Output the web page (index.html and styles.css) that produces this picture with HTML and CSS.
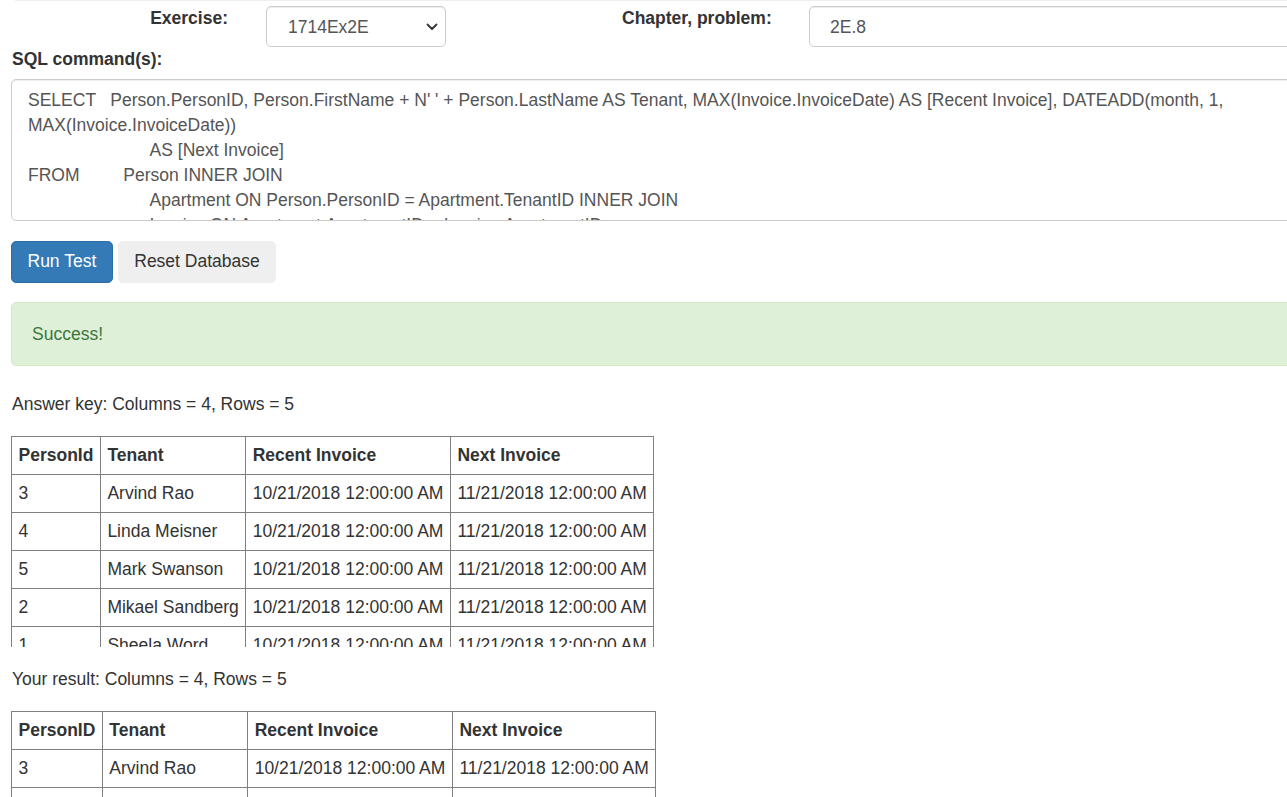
FILE: index.html
```html
<!DOCTYPE html>
<html lang="en">
<head>
<meta charset="utf-8">
<title>SQL Exercise</title>
<link rel="stylesheet" href="styles.css">
</head>
<body>
<div class="page">
  <div class="topline"></div>
  <div class="form-row">
    <div class="cell cell-label1"><label class="lbl">Exercise:</label></div>
    <div class="cell cell-select">
      <div class="select-wrap">
        <select class="form-control select">
          <option>1714Ex2E</option>
        </select>
        <svg class="chevron" width="12" height="8" viewBox="0 0 12 8" aria-hidden="true">
          <path d="M1.5 1.5 L6 6 L10.5 1.5" fill="none" stroke="#333" stroke-width="1.8" stroke-linecap="round" stroke-linejoin="round"/>
        </svg>
      </div>
    </div>
    <div class="cell cell-label2"><label class="lbl">Chapter, problem:</label></div>
    <div class="cell cell-input">
      <input class="form-control input" type="text" value="2E.8">
    </div>
  </div>

  <div class="content">
    <label class="lbl sql-label">SQL command(s):</label>
    <div class="sql-box">SELECT   Person.PersonID, Person.FirstName + N' ' + Person.LastName AS Tenant, MAX(Invoice.InvoiceDate) AS [Recent Invoice], DATEADD(month, 1, MAX(Invoice.InvoiceDate))
                         AS [Next Invoice]
FROM         Person INNER JOIN
                         Apartment ON Person.PersonID = Apartment.TenantID INNER JOIN
                         Invoice ON Apartment.ApartmentID = Invoice.ApartmentID
GROUP BY Person.PersonID, Person.FirstName, Person.LastName</div>

    <div class="buttons">
      <button class="btn btn-primary">Run Test</button>
      <button class="btn btn-default">Reset Database</button>
    </div>

    <div class="alert">Success!</div>

    <p class="count">Answer key: Columns = 4, Rows = 5</p>
    <div class="table-wrap">
      <table class="grid">
        <tr><th>PersonId</th><th>Tenant</th><th>Recent Invoice</th><th>Next Invoice</th></tr>
        <tr><td>3</td><td>Arvind Rao</td><td>10/21/2018 12:00:00 AM</td><td>11/21/2018 12:00:00 AM</td></tr>
        <tr><td>4</td><td>Linda Meisner</td><td>10/21/2018 12:00:00 AM</td><td>11/21/2018 12:00:00 AM</td></tr>
        <tr><td>5</td><td>Mark Swanson</td><td>10/21/2018 12:00:00 AM</td><td>11/21/2018 12:00:00 AM</td></tr>
        <tr><td>2</td><td>Mikael Sandberg</td><td>10/21/2018 12:00:00 AM</td><td>11/21/2018 12:00:00 AM</td></tr>
        <tr><td>1</td><td>Sheela Word</td><td>10/21/2018 12:00:00 AM</td><td>11/21/2018 12:00:00 AM</td></tr>
      </table>
    </div>

    <p class="count count2">Your result: Columns = 4, Rows = 5</p>
    <div class="table-wrap">
      <table class="grid">
        <tr><th>PersonID</th><th>Tenant</th><th>Recent Invoice</th><th>Next Invoice</th></tr>
        <tr><td>3</td><td>Arvind Rao</td><td>10/21/2018 12:00:00 AM</td><td>11/21/2018 12:00:00 AM</td></tr>
        <tr><td>4</td><td>Linda Meisner</td><td>10/21/2018 12:00:00 AM</td><td>11/21/2018 12:00:00 AM</td></tr>
        <tr><td>5</td><td>Mark Swanson</td><td>10/21/2018 12:00:00 AM</td><td>11/21/2018 12:00:00 AM</td></tr>
        <tr><td>2</td><td>Mikael Sandberg</td><td>10/21/2018 12:00:00 AM</td><td>11/21/2018 12:00:00 AM</td></tr>
        <tr><td>1</td><td>Sheela Word</td><td>10/21/2018 12:00:00 AM</td><td>11/21/2018 12:00:00 AM</td></tr>
      </table>
    </div>
  </div>
</div>
</body>
</html>
```

FILE: styles.css
```css
html, body {
  margin: 0;
  padding: 0;
  overflow: hidden;
  background: #fff;
}

body {
  font-family: "Liberation Sans", Arial, Helvetica, sans-serif;
  font-size: 17.5px;
  line-height: 25px;
  color: #333;
}

.page {
  width: 1331px;
}

.topline {
  margin-left: 15px;
  border-top: 1px solid #eeeeee;
}

.form-row {
  display: grid;
  grid-template-columns: 247px 375px 187px 1fr;
  margin-top: 5px;
}

.lbl {
  display: block;
  font-weight: bold;
  line-height: 25px;
}

.cell-label1 {
  text-align: right;
  padding-right: 19px;
}

.cell-select {
  padding-left: 19px;
}

.select-wrap {
  position: relative;
  width: 180px;
}

.chevron {
  position: absolute;
  right: 8px;
  top: 17px;
  pointer-events: none;
}

.form-control {
  box-sizing: border-box;
  height: 41px;
  border: 1px solid #ccc;
  border-radius: 5px;
  font-family: "Liberation Sans", Arial, Helvetica, sans-serif;
  font-size: 17.5px;
  color: #555;
  background: #fff;
  box-shadow: inset 0 1px 1px rgba(0, 0, 0, 0.075);
}

.select {
  -webkit-appearance: none;
  appearance: none;
  display: block;
  width: 180px;
  padding: 1px 30px 0 21px;
}

.input {
  width: 100%;
  padding: 1px 20px 0 20px;
  display: block;
}

.content {
  padding-left: 11px;
}

.sql-label {
  padding-left: 1px;
  margin-bottom: 7px;
}

.sql-box {
  box-sizing: border-box;
  height: 142px;
  overflow: hidden;
  border: 1px solid #ccc;
  border-radius: 5px;
  box-shadow: inset 0 1px 1px rgba(0, 0, 0, 0.075);
  padding: 8px 16px;
  white-space: pre-wrap;
  color: #555;
  line-height: 25px;
}

.buttons {
  display: flex;
  gap: 5px;
  margin-top: 20px;
}

.btn {
  box-sizing: border-box;
  height: 42px;
  padding: 0 15.5px 1px 15.5px;
  border-radius: 5px;
  font-family: "Liberation Sans", Arial, Helvetica, sans-serif;
  font-size: 17.5px;
  line-height: 25px;
  cursor: pointer;
}

.btn-primary {
  background: #337ab7;
  border: 1px solid #2e6da4;
  color: #fff;
}

.btn-default {
  background: #efefef;
  border: 1px solid #efefef;
  color: #333;
}

.alert {
  box-sizing: border-box;
  margin-top: 19px;
  height: 64px;
  padding: 19px 20px;
  background: #dff0d8;
  border: 1px solid #d6e9c6;
  border-radius: 5px;
  color: #3c763d;
}

.count {
  margin: 26px 0 19px 1px;
}

.count2 {
  margin-top: 20px;
  margin-bottom: 19px;
}

.table-wrap {
  height: 211px;
  overflow: hidden;
}

.grid {
  border-collapse: collapse;
  border: 1px solid #808080;
}

.grid th,
.grid td {
  border: 1px solid #808080;
  padding: 6px 6.5px;
  text-align: left;
  white-space: nowrap;
  line-height: 25px;
}

.grid th {
  font-weight: bold;
}
```
